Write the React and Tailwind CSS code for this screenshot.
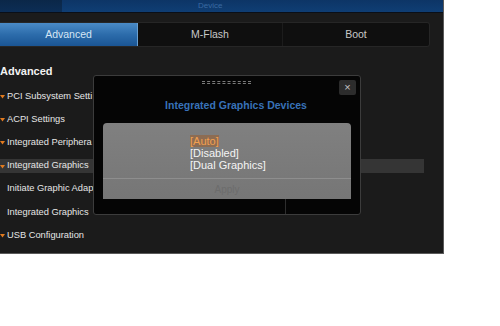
import React from "react";

const items = [
  { label: "PCI Subsystem Setti", arrow: true },
  { label: "ACPI Settings", arrow: true },
  { label: "Integrated Periphera", arrow: true },
  { label: "Integrated Graphics", arrow: true, active: true },
  { label: "Initiate Graphic Adap", arrow: false },
  { label: "Integrated Graphics", arrow: false },
  { label: "USB Configuration", arrow: true },
];

function Arrow() {
  return (
    <svg width="5" height="5" viewBox="0 0 5 5" className="shrink-0">
      <path d="M0 1 L5 1 L2.5 4.5 Z" fill="#e07a20" />
    </svg>
  );
}

export default function App() {
  return (
    <div className="w-[500px] h-[326px] bg-white overflow-hidden font-['Liberation_Sans',Arial,sans-serif]">
      <div className="relative w-[444px] h-[254px] bg-[#1b1b1b] border-r border-b border-[#5a5a5a] flex flex-col">
        {/* top bar */}
        <div className="h-[13px] flex border-b border-[#0a0f18]">
          <div className="w-[62px] bg-gradient-to-b from-[#0b2748] to-[#0c2d55]" />
          <div className="flex-1 bg-gradient-to-b from-[#0d3566] to-[#0f3e74] pl-[136px] text-[8px] leading-[12px] text-[#3a6aa2]">
            Device
          </div>
        </div>
        <div className="h-[9px]" />

        {/* tabs */}
        <div className="w-[430px] h-[25px] flex rounded-r-[3px] border border-l-0 border-[#262626] bg-[#0f0f0f] text-[10.5px]">
          <div className="w-[138px] flex items-center justify-center bg-gradient-to-b from-[#4a8bc6] via-[#2c6cab] to-[#1a5594] text-[#d6e6f5] border-r border-[#6aa0d0]">
            Advanced
          </div>
          <div className="w-[145px] flex items-center justify-center text-[#c8c8c8] border-r border-[#1c1c1c]">
            M-Flash
          </div>
          <div className="flex-1 flex items-center justify-center text-[#c8c8c8]">
            Boot
          </div>
        </div>

        {/* content */}
        <div className="pt-[17px] text-[11px] font-bold text-[#f2f2f2] leading-[14px]">
          Advanced
        </div>
        <div className="pt-[7px] flex flex-col">
          {items.map((item, i) => (
            <div key={i} className="h-[23.2px] flex items-center">
              <div
                className={`w-[424px] h-[14px] flex items-center gap-[2px] text-[9.3px] text-[#e6e6e6] ${
                  item.active ? "bg-[#353535]" : ""
                }`}
              >
                <div className="w-[5px] flex">{item.arrow && <Arrow />}</div>
                <span>{item.label}</span>
              </div>
            </div>
          ))}
        </div>

        {/* popup */}
        <div className="absolute left-[93px] top-[75px] w-[268px] h-[140px] bg-[#050505] border border-[#3c3c3c] rounded-[3px] flex flex-col px-[9px]">
          <div className="h-[3px] mt-[5px] ml-[99px] w-[49px] border-y border-dashed border-[#7a7a7a]" />
          <div className="absolute right-[4px] top-[4px] w-[17px] h-[15px] bg-[#2c2c2c] rounded-[2px] flex items-center justify-center text-[11px] leading-none text-[#c4c4c4]">
            ×
          </div>
          <div className="mt-[15px] pl-[18px] text-center text-[10.5px] font-bold text-[#3872b8] leading-[12px]">
            Integrated Graphics Devices
          </div>
          <div className="mt-[12px] h-[76px] rounded-t-[4px] bg-gradient-to-b from-[#808080] to-[#767676] flex flex-col">
            <div className="pl-[87px] pt-[12px] flex flex-col items-start text-[11px] leading-[12px]">
              <span className="bg-[#8d6c52] text-[#f2a050]">[Auto]</span>
              <span className="text-[#f4f4f4]">[Disabled]</span>
              <span className="text-[#f4f4f4]">[Dual Graphics]</span>
            </div>
            <div className="mt-auto h-[21px] border-t border-[#8e8e8e] flex items-center justify-center text-[10px] text-[#6c6c6c]">
              Apply
            </div>
          </div>
          <div className="flex-1 flex">
            <div className="ml-[182px] w-px bg-[#2e2e2e]" />
          </div>
        </div>
      </div>
    </div>
  );
}
